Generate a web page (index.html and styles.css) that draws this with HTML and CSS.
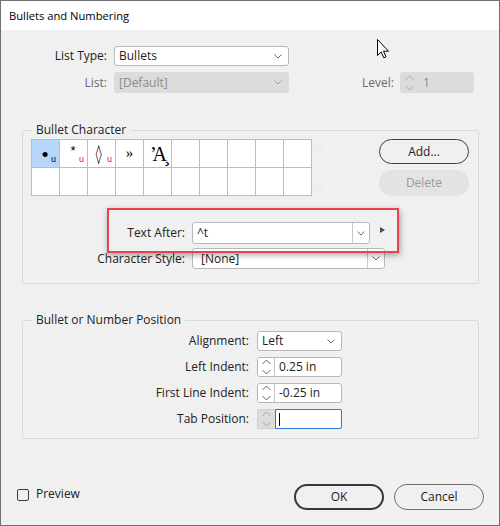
FILE: index.html
```html
<!DOCTYPE html>
<html>
<head>
<meta charset="utf-8">
<title>Bullets and Numbering</title>
<link rel="stylesheet" href="styles.css">
</head>
<body>
<div class="dialog">
  <div class="titlebar">Bullets and Numbering</div>
  <div class="main">
    <div class="row r1">
      <span class="lbl lbl-top">List Type:</span>
      <div class="select s-top"><span>Bullets</span><svg class="chev" width="8" height="5" viewBox="0 0 8 5"><path d="M0.5 0.5 L4 4 L7.5 0.5"/></svg></div>
    </div>
    <div class="row r2">
      <span class="lbl lbl-top dis">List:</span>
      <div class="select s-top disabled"><span>[Default]</span><svg class="chev" width="8" height="5" viewBox="0 0 8 5"><path d="M0.5 0.5 L4 4 L7.5 0.5"/></svg></div>
      <span class="lbl lbl-level dis">Level:</span>
      <div class="level-box">
        <svg class="spinico" width="9" height="16" viewBox="0 0 9 16"><path d="M0.5 5 L4.5 1 L8.5 5 M0.5 11 L4.5 15 L8.5 11"/></svg>
        <span class="level-val">1</span>
      </div>
    </div>

    <fieldset class="group g1">
      <legend>Bullet Character</legend>
      <div class="bc-top">
        <div class="glyphs">
          <div class="cell sel"><span class="g g-bul">•</span><span class="u">u</span></div>
          <div class="cell"><span class="g g-ast">*</span><span class="u red">u</span></div>
          <div class="cell"><span class="g g-loz">◊</span><span class="u red">u</span></div>
          <div class="cell"><span class="g g-raq">»</span></div>
          <div class="cell"><span class="g g-a">ʼA̧</span></div>
          <div class="cell"></div><div class="cell"></div><div class="cell"></div><div class="cell"></div><div class="cell"></div>
          <div class="cell"></div><div class="cell"></div><div class="cell"></div><div class="cell"></div><div class="cell"></div>
          <div class="cell"></div><div class="cell"></div><div class="cell"></div><div class="cell"></div><div class="cell"></div>
        </div>
        <div class="scrollcol">
          <svg width="9" height="5" viewBox="0 0 9 5"><path d="M0.5 4.5 L4.5 0.5 L8.5 4.5"/></svg>
          <svg width="9" height="5" viewBox="0 0 9 5"><path d="M0.5 0.5 L4.5 4.5 L8.5 0.5"/></svg>
        </div>
        <div class="btns">
          <div class="pill add">Add...</div>
          <div class="pill del">Delete</div>
        </div>
      </div>
      <div class="ta-wrap">
        <div class="row ta">
          <span class="lbl lbl-g1">Text After:</span>
          <div class="combo c-ta"><span class="ctext">^t</span><span class="dd"><svg class="chev" width="8" height="5" viewBox="0 0 8 5"><path d="M0.5 0.5 L4 4 L7.5 0.5"/></svg></span></div>
          <span class="tri"></span>
        </div>
        <div class="row cs">
          <span class="lbl lbl-g1">Character Style:</span>
          <div class="combo c-cs"><span class="ctext">[None]</span><span class="dd"><svg class="chev" width="8" height="5" viewBox="0 0 8 5"><path d="M0.5 0.5 L4 4 L7.5 0.5"/></svg></span></div>
        </div>
        <div class="highlight"></div>
      </div>
    </fieldset>

    <fieldset class="group g2">
      <legend>Bullet or Number Position</legend>
      <div class="row pr">
        <span class="lbl lbl-g2">Alignment:</span>
        <div class="select s-align"><span>Left</span><svg class="chev" width="8" height="5" viewBox="0 0 8 5"><path d="M0.5 0.5 L4 4 L7.5 0.5"/></svg></div>
      </div>
      <div class="row pr">
        <span class="lbl lbl-g2">Left Indent:</span>
        <div class="spin"><span class="sp"><svg width="9" height="16" viewBox="0 0 9 16"><path d="M0.5 5 L4.5 1 L8.5 5 M0.5 11 L4.5 15 L8.5 11"/></svg></span><span class="sv">0.25 in</span></div>
      </div>
      <div class="row pr">
        <span class="lbl lbl-g2">First Line Indent:</span>
        <div class="spin"><span class="sp"><svg width="9" height="16" viewBox="0 0 9 16"><path d="M0.5 5 L4.5 1 L8.5 5 M0.5 11 L4.5 15 L8.5 11"/></svg></span><span class="sv">-0.25 in</span></div>
      </div>
      <div class="row pr">
        <span class="lbl lbl-g2">Tab Position:</span>
        <div class="spin focus"><span class="sp sp-dis"><svg width="9" height="16" viewBox="0 0 9 16"><path d="M0.5 5 L4.5 1 L8.5 5 M0.5 11 L4.5 15 L8.5 11"/></svg></span><span class="sv fv"><span class="caret"></span></span></div>
      </div>
    </fieldset>
  </div>

  <div class="footer">
    <span class="checkbox"></span>
    <span class="cb-lbl">Preview</span>
    <div class="pill ok">OK</div>
    <div class="pill cancel">Cancel</div>
  </div>

  <svg class="cursor" width="13" height="20" viewBox="0 0 13 20"><path d="M0.5 0.5 L0.5 16.5 L4.2 13 L6.8 18.8 L9 17.8 L6.5 12.2 L11.5 12.2 Z"/></svg>
</div>
</body>
</html>
```

FILE: styles.css
```css
* { box-sizing: border-box; }
html, body { margin: 0; padding: 0; }
body {
  width: 500px;
  height: 526px;
  background: #f0f0f0;
  font-family: "Open Sans", "Noto Sans", sans-serif;
  font-size: 12px;
  color: #222;
}
.dialog {
  position: relative;
  width: 500px;
  height: 526px;
  border: 1px solid #707070;
  background: #f0f0f0;
  display: flex;
  flex-direction: column;
}
.titlebar {
  height: 29px;
  flex: none;
  background: #fff;
  padding-left: 8px;
  line-height: 29px;
  font-size: 11.2px;
  color: #000;
}
.main { padding-top: 16px; }
.row { display: flex; align-items: center; }
.lbl { flex: none; text-align: right; white-space: nowrap; line-height: 16px; }
.dis { color: #6b6b6b; }
.lbl-top { width: 106px; margin-right: 7px; }
.lbl-level { width: 105px; margin-right: 6px; }
.r2 { margin-top: 6px; }

.chev { fill: none; stroke: #6a6a6a; stroke-width: 1; }

.select {
  display: flex;
  align-items: center;
  justify-content: space-between;
  height: 20px;
  border: 1px solid #b8b8b8;
  border-radius: 3px;
  background: #fff;
  padding: 0 6px 0 4px;
  line-height: 16px;
}
.s-top { width: 175px; }
.r2 .s-top { height: 21px; }
.select.disabled {
  background: #dcdcdc;
  border-color: #dcdcdc;
  color: #8a8a8a;
}
.select.disabled .chev { stroke: #a0a0a0; }

.level-box {
  width: 74px;
  height: 21px;
  background: #dcdcdc;
  border-radius: 3px;
  display: flex;
  align-items: center;
  padding-left: 5px;
  color: #8a8a8a;
}
.spinico { fill: none; stroke: #a8a8a8; stroke-width: 1; }
.level-val { margin-left: 9px; line-height: 16px; }

fieldset.group {
  margin-left: 21px;
  margin-right: 0;
  margin-bottom: 0;
  width: 457px;
  min-width: 0;
  border: 1px solid #d9d9d9;
  border-radius: 3px;
}
fieldset.group legend {
  padding: 0 4px;
  margin-left: 1px;
  height: 16px;
  line-height: 16px;
  color: #222;
}
fieldset.g1 { margin-top: 29px; padding: 1px 9px 14px 8px; }
fieldset.g2 { margin-top: 28px; padding: 3px 9px 9px 8px; }

.bc-top { display: flex; align-items: flex-start; }
.glyphs {
  display: grid;
  grid-template-columns: repeat(10, 27px);
  grid-auto-rows: 27px;
  gap: 1px;
  background: #bcbcbc;
  border: 1px solid #bcbcbc;
}
.cell { background: #fff; position: relative; display: flex; align-items: center; justify-content: center; }
.cell.sel { background: #b6d6fc; }
.g { font-family: "Liberation Serif", serif; color: #000; line-height: 1; }
.g-bul { font-family: "Liberation Sans", sans-serif; font-size: 19px; margin-left: -1px; margin-top: 1px; }
.g-ast { font-family: "Liberation Sans", sans-serif; font-size: 13px; margin-top: -7px; margin-left: -1px; }
.g-loz { font-family: "DejaVu Serif", serif; font-size: 19px; margin-left: -5px; transform: scaleX(0.62); }
.g-raq { font-family: "Liberation Serif", serif; font-size: 15px; }
.g-a { font-size: 20px; letter-spacing: -4px; margin-left: -2px; }
.u {
  position: absolute;
  left: 19px;
  bottom: 3px;
  font-family: "Liberation Sans", sans-serif;
  font-size: 9px;
  line-height: 9px;
  color: #000;
}
.u.red { color: #e0101a; }

.scrollcol {
  width: 9px;
  height: 57px;
  margin-left: 3px;
  padding: 5px 0 6px;
  display: flex;
  flex-direction: column;
  justify-content: space-between;
}
.scrollcol svg { fill: none; stroke: #e2e2e2; stroke-width: 1; display: block; }

.btns { margin-left: auto; display: flex; flex-direction: column; gap: 6px; }
.pill {
  display: flex;
  align-items: center;
  justify-content: center;
  width: 90px;
  border-radius: 13px;
  line-height: 16px;
}
.add { height: 25px; border: 1px solid #3f3f3f; color: #222; }
.del { height: 26px; background: #e3e3e3; color: #9a9a9a; }

.ta-wrap { position: relative; margin-top: 26px; }
.lbl-g1 { width: 154px; margin-right: 7px; }
.combo {
  display: flex;
  align-items: stretch;
  background: #fff;
  border: 1px solid #b8b8b8;
  border-radius: 3px;
  line-height: 16px;
}
.combo .ctext { flex: 1; display: flex; align-items: center; }
.combo .dd {
  width: 17px;
  border-left: 1px solid #c8c8c8;
  display: flex;
  align-items: center;
  justify-content: center;
}
.c-ta { width: 178px; height: 22px; }
.c-ta .ctext { padding-left: 4px; }
.c-cs { width: 193px; height: 21px; }
.c-cs .ctext { padding-left: 8px; }
.tri {
  width: 0;
  height: 0;
  margin-left: 10px;
  margin-top: -6px;
  border-left: 5px solid #4a4a4a;
  border-top: 3.5px solid transparent;
  border-bottom: 3.5px solid transparent;
}
.cs { margin-top: 4px; }
.highlight {
  position: absolute;
  left: 76px;
  top: -14px;
  width: 292px;
  height: 45px;
  border: 2px solid #e5444a;
  box-shadow: 1px 2px 6px rgba(0, 0, 0, 0.35);
  z-index: 2;
}

.lbl-g2 { width: 218px; margin-right: 8px; }
.pr + .pr { margin-top: 6px; }
.s-align { width: 85px; }
.spin {
  display: flex;
  width: 85px;
  height: 20px;
  background: #fff;
  border: 1px solid #b8b8b8;
  border-radius: 3px;
  line-height: 16px;
}
.spin .sp {
  width: 17px;
  flex: none;
  border-right: 1px solid #c4c4c4;
  display: flex;
  align-items: center;
  justify-content: center;
  background: #fff;
  border-radius: 2px 0 0 2px;
}
.spin .sp svg { fill: none; stroke: #666; stroke-width: 1; }
.spin .sv { flex: 1; display: flex; align-items: center; padding-left: 4px; }
.spin.focus { border: none; background: transparent; }
.spin.focus .sp.sp-dis {
  width: 18px;
  background: #dcdcdc;
  border: 1px solid #d0d0d0;
  border-right: none;
}
.spin.focus .sp-dis svg { stroke: #a8a8a8; }
.spin.focus .fv {
  background: #fff;
  border: 1px solid #2b78d8;
  border-radius: 0 2px 2px 0;
  padding-left: 3px;
}
.caret { width: 1px; height: 13px; background: #000; }

.footer {
  margin-top: auto;
  display: flex;
  align-items: center;
  padding: 0 15px 15px 16px;
}
.checkbox {
  width: 12px;
  height: 12px;
  border: 1px solid #3c3c3c;
  border-radius: 2px;
  margin-bottom: 5px;
}
.cb-lbl { margin-left: 7px; margin-bottom: 6px; line-height: 16px; }
.ok { margin-left: auto; height: 26px; border: 2px solid #383838; }
.cancel { margin-left: 10px; height: 26px; border: 1px solid #6e6e6e; }

.cursor {
  position: absolute;
  left: 376px;
  top: 38px;
  fill: #fff;
  stroke: #000;
  stroke-width: 1;
}
```
